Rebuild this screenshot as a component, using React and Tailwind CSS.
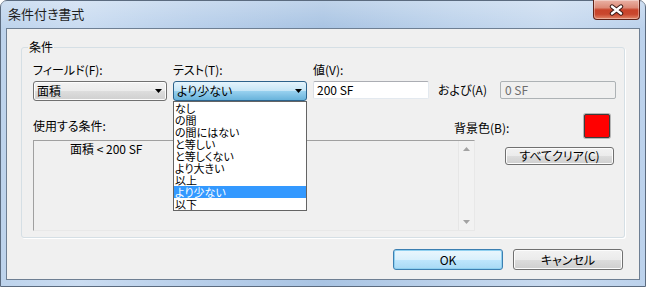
import React from 'react';

const items = ['なし', 'の間', 'の間にはない', 'と等しい', 'と等しくない', 'より大きい', '以上', 'より少ない', '以下'];

function Arrow() {
  return (
    <svg width="7" height="4" viewBox="0 0 7 4" className="shrink-0">
      <path d="M0 0h7L3.5 4z" fill="#000" />
    </svg>
  );
}

function CloseButton() {
  return (
    <div className="-mt-[1px] mr-[5px] flex h-[20px] w-[47px] items-center justify-center rounded-b-[4px] border border-t-0 border-[#5e2218] bg-[linear-gradient(180deg,#eab2a5_0%,#dc8a77_40%,#c8432a_52%,#c9472e_75%,#e2876a_100%)] shadow-[inset_0_0_0_1px_rgba(255,255,255,0.35)]">
      <svg width="15" height="12" viewBox="0 0 15 12">
        <path d="M3 2.5l9 7M12 2.5l-9 7" stroke="#3a1a16" strokeWidth="4.4" strokeLinecap="round" />
        <path d="M3 2.5l9 7M12 2.5l-9 7" stroke="#fff" strokeWidth="2.4" strokeLinecap="round" />
      </svg>
    </div>
  );
}

function Button({ children, primary, className = '' }) {
  const look = primary
    ? 'border-[#3c7fb1] bg-[linear-gradient(180deg,#eaf6fd_0%,#d9f0fc_50%,#bee6fd_51%,#a7d9f5_100%)] shadow-[inset_0_0_0_1px_#8fd0f0]'
    : 'border-[#707070] bg-[linear-gradient(180deg,#f2f2f2_0%,#ebebeb_50%,#dddddd_51%,#cfcfcf_100%)] shadow-[inset_0_0_0_1px_#fcfcfc]';
  return (
    <div className={`flex items-center justify-center rounded-[3px] border leading-[14px] ${look} ${className}`}>
      {children}
    </div>
  );
}

export default function App() {
  return (
    <div className="h-[287px] w-[646px] bg-white font-['Noto_Sans_CJK_JP',sans-serif] text-[12px] text-black [font-feature-settings:'palt']">
      <div className="flex h-full flex-col rounded-t-[7px] border border-[#5b6b7f] bg-[linear-gradient(90deg,#bdd3ec_0%,#cadcf1_12%,#b8cfea_30%,#a9c4e3_50%,#bcd2eb_70%,#c8daef_85%,#bcd2ec_100%)]">
        {/* Title bar */}
        <div className="flex h-[27px] shrink-0 items-start justify-between bg-[linear-gradient(180deg,rgba(255,255,255,0.25),rgba(255,255,255,0))]">
          <div className="pl-[7px] pt-[4px] text-[13px] leading-[17px] text-[#1e1e1e]">条件付き書式</div>
          <CloseButton />
        </div>

        {/* Client area */}
        <div className="mx-[5px] mb-[6px] flex flex-1 flex-col border border-[#6e7f93] bg-[#f0f0f0]">
          <fieldset className="mx-[14px] mt-[11px] rounded-[3px] border border-[#d5dfe5] shadow-[1px_1px_0_#fff]">
            <legend className="ml-[6px] px-[1px] leading-[14px]">条件</legend>

            <div className="pb-[6px] pl-[11px] pr-[8px] pt-[9px]">
              {/* Row 1: field / test / value */}
              <div className="flex items-start">
                <div className="w-[134px]">
                  <div className="leading-[14px]">フィールド(F):</div>
                  <div className="mt-[4px] flex h-[20px] items-center justify-between rounded-[3px] border border-[#707070] bg-[linear-gradient(180deg,#f2f2f2_0%,#ebebeb_50%,#dddddd_51%,#cfcfcf_100%)] pl-[3px] pr-[4px] shadow-[inset_0_0_0_1px_#fcfcfc]">
                    <span className="leading-[14px]">面積</span>
                    <Arrow />
                  </div>
                </div>

                <div className="relative ml-[6px] w-[134px]">
                  <div className="leading-[14px]">テスト(T):</div>
                  <div className="mt-[4px] flex h-[20px] items-center justify-between rounded-[3px] border border-[#2c628b] bg-[linear-gradient(180deg,#e5f4fc_0%,#c4e5f6_50%,#98d1ef_51%,#68b3db_100%)] pl-[3px] pr-[4px]">
                    <span className="leading-[14px]">より少ない</span>
                    <Arrow />
                  </div>
                  {/* Open dropdown */}
                  <div className="absolute left-0 top-full z-10 w-full border border-[#646464] bg-white">
                    {items.map((it) => (
                      <div
                        key={it}
                        className={`h-[12px] pl-[1px] text-[11px] leading-[12px] ${it === 'より少ない' ? 'bg-[#3399ff] text-white' : ''}`}
                      >
                        {it}
                      </div>
                    ))}
                  </div>
                </div>

                <div className="ml-[6px] w-[116px]">
                  <div className="leading-[14px]">値(V):</div>
                  <div className="mt-[4px] flex h-[18px] items-center rounded-[2px] border border-[#e3e9ef] border-l-[#dbdfe6] border-t-[#abadb3] bg-white pl-[3px] leading-[14px]">
                    200 SF
                  </div>
                </div>

                <div className="ml-[9px] mt-[18px] leading-[18px]">および(A)</div>

                <div className="ml-auto mt-[18px] flex h-[18px] w-[116px] items-center rounded-[2px] border border-[#adb2b5] bg-[#f0f0f0] pl-[4px] leading-[14px] text-[#6d6d6d]">
                  0 SF
                </div>
              </div>

              {/* Row 2: labels + colour */}
              <div className="mt-[13px] flex h-[24px] items-center">
                <div className="leading-[14px]">使用する条件:</div>
                <div className="ml-auto mr-[6px] flex w-[156px] items-center justify-between">
                  <div className="mt-[4px] leading-[14px]">背景色(B):</div>
                  <div className="h-[24px] w-[26px] rounded-[2px] border border-[#3c3c3c] bg-[#ff0000] shadow-[0_0_0_1px_#b5b5b5]" />
                </div>
              </div>

              {/* Row 3: condition list + clear button */}
              <div className="mt-[2px] flex items-start">
                <div className="flex h-[91px] w-[442px] border border-[#a0a0a0] border-b-[#e8e8e8] border-r-[#e8e8e8] bg-[#f0f0f0]">
                  <div className="flex-1 pl-[36px] pt-[1px] leading-[14px]">面積 &lt; 200 SF</div>
                  <div className="flex w-[16px] flex-col items-center justify-between border-l border-[#e6e6e6] bg-[#f2f2f2] py-[6px]">
                    <svg width="7" height="4" viewBox="0 0 7 4">
                      <path d="M0 4h7L3.5 0z" fill="#a3a3a3" />
                    </svg>
                    <svg width="7" height="4" viewBox="0 0 7 4">
                      <path d="M0 0h7L3.5 4z" fill="#a3a3a3" />
                    </svg>
                  </div>
                </div>
                <Button className="ml-auto mr-[2px] mt-[7px] h-[18px] w-[109px]">すべてクリア(C)</Button>
              </div>
            </div>
          </fieldset>

          {/* Dialog buttons */}
          <div className="mr-[16px] mt-[11px] flex justify-end gap-[10px]">
            <Button primary className="h-[21px] w-[110px]">OK</Button>
            <Button className="h-[21px] w-[110px]">キャンセル</Button>
          </div>
        </div>
      </div>
    </div>
  );
}
